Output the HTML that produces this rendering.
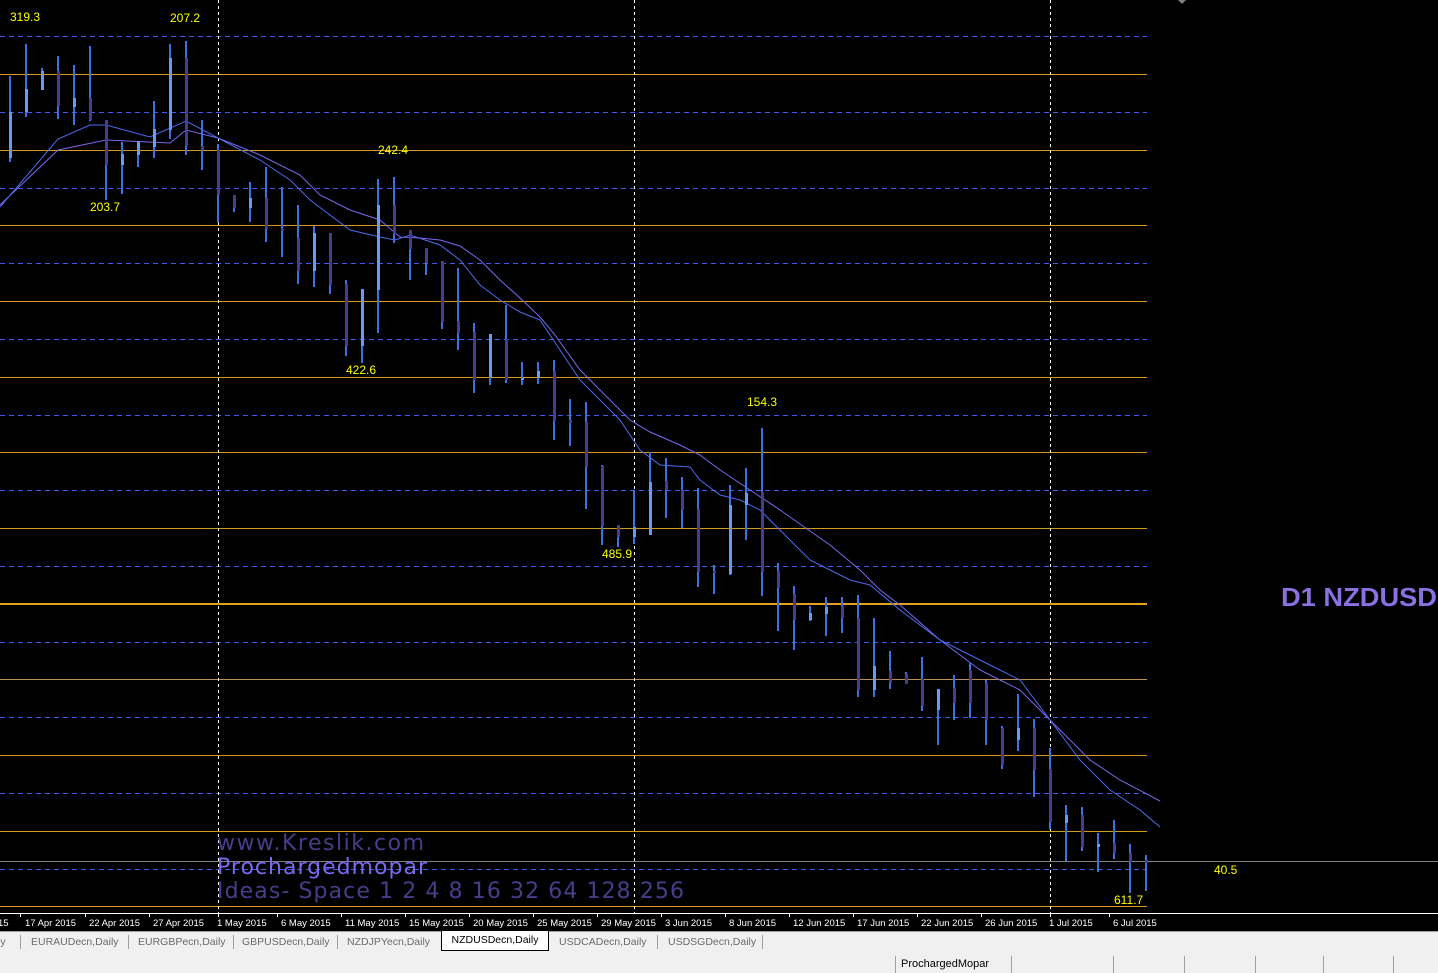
<!DOCTYPE html>
<html><head><meta charset="utf-8"><style>
html,body{margin:0;padding:0;width:1438px;height:973px;overflow:hidden;background:#000;font-family:"Liberation Sans",sans-serif}
#tabs{position:absolute;left:0;top:931px;width:1438px;height:21px;background:#f0f0f0;border-top:1px solid #a0a0a0}
.t{position:absolute;top:4px;font-size:10.5px;color:#6b6b6b;white-space:nowrap}
.sep{position:absolute;top:3px;width:1px;height:14px;background:#a0a0a0}
#act{position:absolute;left:441px;top:-1px;width:106px;height:19px;background:#fff;border:1px solid #000;border-top:none;font-size:10.5px;color:#000;text-align:center;line-height:19px}
#status{position:absolute;left:0;top:953px;width:1438px;height:20px;background:#f0f0f0}
.d{position:absolute;top:3px;width:1px;height:17px;background:#a0a0a0}
</style></head><body>
<svg width="1438" height="931" style="position:absolute;left:0;top:0" xmlns="http://www.w3.org/2000/svg">
<rect width="1438" height="931" fill="#000"/>
<g stroke="#3c5ee8" stroke-width="1" stroke-dasharray="5,4">
<line x1="0" y1="36.5" x2="1147" y2="36.5"/><line x1="0" y1="112.5" x2="1147" y2="112.5"/><line x1="0" y1="188.5" x2="1147" y2="188.5"/><line x1="0" y1="263.5" x2="1147" y2="263.5"/><line x1="0" y1="339.5" x2="1147" y2="339.5"/><line x1="0" y1="415.5" x2="1147" y2="415.5"/><line x1="0" y1="490.5" x2="1147" y2="490.5"/><line x1="0" y1="566.5" x2="1147" y2="566.5"/><line x1="0" y1="642.5" x2="1147" y2="642.5"/><line x1="0" y1="717.5" x2="1147" y2="717.5"/><line x1="0" y1="793.5" x2="1147" y2="793.5"/><line x1="0" y1="869.5" x2="1147" y2="869.5"/>
</g>
<g stroke="#d49a1e" stroke-width="1">
<line x1="0" y1="74.5" x2="1147" y2="74.5"/><line x1="0" y1="150.5" x2="1147" y2="150.5"/><line x1="0" y1="225.5" x2="1147" y2="225.5"/><line x1="0" y1="301.5" x2="1147" y2="301.5"/><line x1="0" y1="377.5" x2="1147" y2="377.5"/><line x1="0" y1="452.5" x2="1147" y2="452.5"/><line x1="0" y1="528.5" x2="1147" y2="528.5"/><line x1="0" y1="604" x2="1147" y2="604" stroke-width="2" stroke="#e0a020"/><line x1="0" y1="679.5" x2="1147" y2="679.5" stroke="#b89050"/><line x1="0" y1="755.5" x2="1147" y2="755.5"/><line x1="0" y1="831.5" x2="1147" y2="831.5"/><line x1="0" y1="906.5" x2="1147" y2="906.5"/>
</g>
<line x1="0" y1="861.5" x2="1438" y2="861.5" stroke="#808080"/>
<g stroke="#fff" stroke-dasharray="3,3"><line x1="218.5" y1="0" x2="218.5" y2="913"/><line x1="634.5" y1="0" x2="634.5" y2="913"/><line x1="1050.5" y1="0" x2="1050.5" y2="913"/></g>
<text x="217" y="850" font-family="DejaVu Sans,sans-serif" font-size="22" fill="#483d8b" textLength="207">www.Kreslik.com</text>
<text x="217" y="874" font-family="DejaVu Sans,sans-serif" font-size="22" fill="#7b68ee" textLength="210">Prochargedmopar</text>
<text x="217" y="898" font-family="DejaVu Sans,sans-serif" font-size="22" fill="#483d8b" textLength="467">Ideas- Space 1 2 4 8 16 32 64 128 256</text>
<polyline fill="none" stroke="#7b68ee" stroke-width="1" points="0,205 58,150 106,140 170,143 186,130 218,138 260,155 300,175 320,195 350,210 380,220 400,237 420,238 440,240 460,246 480,260 500,280 520,298 540,317 555,335 580,370 605,395 630,420 650,432 680,445 700,455 720,470 750,490 780,510 830,545 860,570 880,590 900,605 940,640 980,670 1000,680 1020,690 1040,710 1060,730 1090,760 1120,780 1160,801"/>
<polyline fill="none" stroke="#4a6cf0" stroke-width="1" points="0,207 58,139 90,125 106,125 150,137 186,121 218,138 260,160 290,180 310,200 350,230 380,237 395,240 410,235 440,245 460,260 480,285 500,300 520,312 540,320 560,350 580,380 600,400 620,420 640,450 660,465 690,467 700,480 720,495 740,500 760,510 780,530 810,560 850,580 870,585 900,610 940,640 970,655 990,665 1020,680 1050,720 1080,760 1110,790 1140,810 1160,827"/>
<g fill="#3f6fe6">
<rect x="9" y="76" width="2" height="86"/><rect x="25" y="44" width="2" height="73"/><rect x="41" y="68" width="2" height="22"/><rect x="57" y="56" width="2" height="63"/><rect x="73" y="65" width="2" height="60"/><rect x="89" y="46" width="2" height="75"/><rect x="105" y="120" width="2" height="80"/><rect x="121" y="142" width="2" height="52"/><rect x="137" y="141" width="2" height="26"/><rect x="153" y="101" width="2" height="57"/><rect x="169" y="44" width="2" height="95"/><rect x="185" y="41" width="2" height="114"/><rect x="201" y="120" width="2" height="50"/><rect x="217" y="144" width="2" height="78"/><rect x="233" y="195" width="2" height="17"/><rect x="249" y="182" width="2" height="40"/><rect x="265" y="167" width="2" height="75"/><rect x="281" y="187" width="2" height="70"/><rect x="297" y="205" width="2" height="79"/><rect x="313" y="226" width="2" height="61"/><rect x="329" y="233" width="2" height="61"/><rect x="345" y="280" width="2" height="76"/><rect x="361" y="289" width="2" height="74"/><rect x="377" y="179" width="2" height="154"/><rect x="393" y="177" width="2" height="66"/><rect x="409" y="230" width="2" height="50"/><rect x="425" y="248" width="2" height="27"/><rect x="441" y="261" width="2" height="68"/><rect x="457" y="268" width="2" height="82"/><rect x="473" y="323" width="2" height="70"/><rect x="489" y="334" width="2" height="51"/><rect x="505" y="305" width="2" height="78"/><rect x="521" y="362" width="2" height="23"/><rect x="537" y="362" width="2" height="22"/><rect x="553" y="360" width="2" height="80"/><rect x="569" y="399" width="2" height="47"/><rect x="585" y="402" width="2" height="107"/><rect x="601" y="465" width="2" height="80"/><rect x="617" y="525" width="2" height="22"/><rect x="633" y="490" width="2" height="54"/><rect x="649" y="452" width="2" height="83"/><rect x="665" y="458" width="2" height="60"/><rect x="681" y="477" width="2" height="51"/><rect x="697" y="488" width="2" height="99"/><rect x="713" y="565" width="2" height="29"/><rect x="729" y="485" width="2" height="90"/><rect x="745" y="468" width="2" height="72"/><rect x="761" y="428" width="2" height="168"/><rect x="777" y="563" width="2" height="68"/><rect x="793" y="586" width="2" height="64"/><rect x="809" y="606" width="2" height="15"/><rect x="825" y="597" width="2" height="39"/><rect x="841" y="597" width="2" height="36"/><rect x="857" y="595" width="2" height="102"/><rect x="873" y="618" width="2" height="79"/><rect x="889" y="651" width="2" height="38"/><rect x="905" y="672" width="2" height="12"/><rect x="921" y="657" width="2" height="54"/><rect x="937" y="700" width="2" height="45"/><rect x="953" y="675" width="2" height="45"/><rect x="969" y="663" width="2" height="55"/><rect x="985" y="680" width="2" height="65"/><rect x="1001" y="726" width="2" height="43"/><rect x="1017" y="694" width="2" height="57"/><rect x="1033" y="719" width="2" height="78"/><rect x="1049" y="748" width="2" height="81"/><rect x="1065" y="805" width="2" height="56"/><rect x="1081" y="807" width="2" height="44"/><rect x="1097" y="833" width="2" height="39"/><rect x="1113" y="820" width="2" height="39"/><rect x="1129" y="844" width="2" height="49"/><rect x="1145" y="855" width="2" height="36"/>
</g>
<g fill="#6a9af2">
<rect x="9" y="112" width="3" height="46"/><rect x="25" y="89" width="3" height="23"/><rect x="41" y="71" width="3" height="19"/><rect x="73" y="98" width="3" height="9"/><rect x="121" y="154" width="3" height="11"/><rect x="137" y="141" width="3" height="14"/><rect x="153" y="129" width="3" height="18"/><rect x="169" y="58" width="3" height="72"/><rect x="249" y="198" width="3" height="10"/><rect x="313" y="233" width="3" height="38"/><rect x="361" y="289" width="3" height="57"/><rect x="377" y="205" width="3" height="85"/><rect x="489" y="334" width="3" height="43"/><rect x="521" y="378" width="3" height="2"/><rect x="537" y="371" width="3" height="7"/><rect x="633" y="527" width="3" height="10"/><rect x="649" y="482" width="3" height="53"/><rect x="729" y="505" width="3" height="69"/><rect x="745" y="493" width="3" height="12"/><rect x="809" y="613" width="3" height="7"/><rect x="825" y="607" width="3" height="7"/><rect x="873" y="666" width="3" height="24"/><rect x="937" y="689" width="3" height="21"/><rect x="1017" y="728" width="3" height="12"/><rect x="1065" y="815" width="3" height="8"/><rect x="1097" y="844" width="3" height="3"/>
</g>
<g fill="#483d8b">
<rect x="57" y="71" width="3" height="35"/><rect x="89" y="98" width="3" height="22"/><rect x="105" y="120" width="3" height="45"/><rect x="185" y="58" width="3" height="88"/><rect x="201" y="146" width="3" height="4"/><rect x="217" y="150" width="3" height="45"/><rect x="233" y="195" width="3" height="13"/><rect x="265" y="198" width="3" height="31"/><rect x="281" y="229" width="3" height="2"/><rect x="297" y="238" width="3" height="33"/><rect x="329" y="233" width="3" height="52"/><rect x="345" y="284" width="3" height="62"/><rect x="393" y="205" width="3" height="29"/><rect x="409" y="230" width="3" height="19"/><rect x="425" y="248" width="3" height="15"/><rect x="441" y="261" width="3" height="61"/><rect x="457" y="321" width="3" height="12"/><rect x="473" y="332" width="3" height="48"/><rect x="505" y="339" width="3" height="41"/><rect x="553" y="371" width="3" height="50"/><rect x="569" y="420" width="3" height="3"/><rect x="585" y="422" width="3" height="45"/><rect x="601" y="466" width="3" height="60"/><rect x="617" y="525" width="3" height="12"/><rect x="665" y="481" width="3" height="9"/><rect x="681" y="490" width="3" height="20"/><rect x="697" y="509" width="3" height="63"/><rect x="713" y="571" width="3" height="2"/><rect x="761" y="492" width="3" height="80"/><rect x="777" y="571" width="3" height="17"/><rect x="793" y="594" width="3" height="26"/><rect x="841" y="606" width="3" height="12"/><rect x="857" y="618" width="3" height="72"/><rect x="889" y="671" width="3" height="12"/><rect x="905" y="674" width="3" height="10"/><rect x="921" y="679" width="3" height="27"/><rect x="953" y="688" width="3" height="15"/><rect x="969" y="670" width="3" height="33"/><rect x="985" y="683" width="3" height="37"/><rect x="1001" y="728" width="3" height="37"/><rect x="1033" y="728" width="3" height="42"/><rect x="1049" y="769" width="3" height="53"/><rect x="1081" y="815" width="3" height="32"/><rect x="1113" y="843" width="3" height="10"/><rect x="1129" y="853" width="3" height="9"/><rect x="1145" y="860" width="3" height="3"/>
</g>
<g font-family="Liberation Sans,sans-serif" font-size="12" fill="#ffff00">
<text x="10" y="21">319.3</text><text x="170" y="22">207.2</text><text x="90" y="211">203.7</text><text x="378" y="154">242.4</text><text x="346" y="374">422.6</text><text x="747" y="406">154.3</text><text x="602" y="558">485.9</text><text x="1114" y="904">611.7</text><text x="1214" y="874">40.5</text>
</g>
<text x="1281" y="606" font-family="Liberation Sans,sans-serif" font-size="26" font-weight="bold" fill="#8a70e0" textLength="156" lengthAdjust="spacingAndGlyphs">D1 NZDUSD</text>
<polygon points="1178,0 1186,0 1182,4" fill="#808080"/>
<rect x="0" y="913" width="1438" height="1" fill="#fff"/>
<g stroke="#fff"><line x1="20.5" y1="913" x2="20.5" y2="917"/><line x1="85.5" y1="913" x2="85.5" y2="917"/><line x1="149.5" y1="913" x2="149.5" y2="917"/><line x1="218.5" y1="913" x2="218.5" y2="917"/><line x1="277.5" y1="913" x2="277.5" y2="917"/><line x1="341.5" y1="913" x2="341.5" y2="917"/><line x1="405.5" y1="913" x2="405.5" y2="917"/><line x1="469.5" y1="913" x2="469.5" y2="917"/><line x1="533.5" y1="913" x2="533.5" y2="917"/><line x1="597.5" y1="913" x2="597.5" y2="917"/><line x1="661.5" y1="913" x2="661.5" y2="917"/><line x1="725.5" y1="913" x2="725.5" y2="917"/><line x1="789.5" y1="913" x2="789.5" y2="917"/><line x1="853.5" y1="913" x2="853.5" y2="917"/><line x1="917.5" y1="913" x2="917.5" y2="917"/><line x1="981.5" y1="913" x2="981.5" y2="917"/><line x1="1050.5" y1="913" x2="1050.5" y2="917"/><line x1="1109.5" y1="913" x2="1109.5" y2="917"/></g>
<g font-family="Liberation Sans,sans-serif" font-size="9.5" fill="#fff">
<text x="-2" y="926">15</text><text x="25" y="926" textLength="51" lengthAdjust="spacingAndGlyphs">17 Apr 2015</text><text x="89" y="926" textLength="51" lengthAdjust="spacingAndGlyphs">22 Apr 2015</text><text x="153" y="926" textLength="51" lengthAdjust="spacingAndGlyphs">27 Apr 2015</text><text x="217" y="926">1 May 2015</text><text x="281" y="926">6 May 2015</text><text x="345" y="926">11 May 2015</text><text x="409" y="926">15 May 2015</text><text x="473" y="926">20 May 2015</text><text x="537" y="926">25 May 2015</text><text x="601" y="926">29 May 2015</text><text x="665" y="926">3 Jun 2015</text><text x="729" y="926">8 Jun 2015</text><text x="793" y="926">12 Jun 2015</text><text x="857" y="926">17 Jun 2015</text><text x="921" y="926">22 Jun 2015</text><text x="985" y="926">26 Jun 2015</text><text x="1049" y="926">1 Jul 2015</text><text x="1113" y="926">6 Jul 2015</text>
</g>
</svg>
<div id="tabs">
<span class="t" style="left:-2px">ly</span><div class="sep" style="left:20px"></div>
<span class="t" style="left:31px">EURAUDecn,Daily</span><div class="sep" style="left:128px"></div>
<span class="t" style="left:138px">EURGBPecn,Daily</span><div class="sep" style="left:233px"></div>
<span class="t" style="left:242px">GBPUSDecn,Daily</span><div class="sep" style="left:337px"></div>
<span class="t" style="left:347px">NZDJPYecn,Daily</span>
<div id="act">NZDUSDecn,Daily</div>
<span class="t" style="left:559px">USDCADecn,Daily</span><div class="sep" style="left:657px"></div>
<span class="t" style="left:668px">USDSGDecn,Daily</span><div class="sep" style="left:762px"></div>
</div>
<div id="status">
<div class="d" style="left:895px"></div><span style="position:absolute;left:901px;top:5px;font-size:11px;color:#000">ProchargedMopar</span>
<div class="d" style="left:1011px"></div><div class="d" style="left:1113px"></div><div class="d" style="left:1184px"></div><div class="d" style="left:1255px"></div><div class="d" style="left:1323px"></div><div class="d" style="left:1393px"></div>
</div>
</body></html>
